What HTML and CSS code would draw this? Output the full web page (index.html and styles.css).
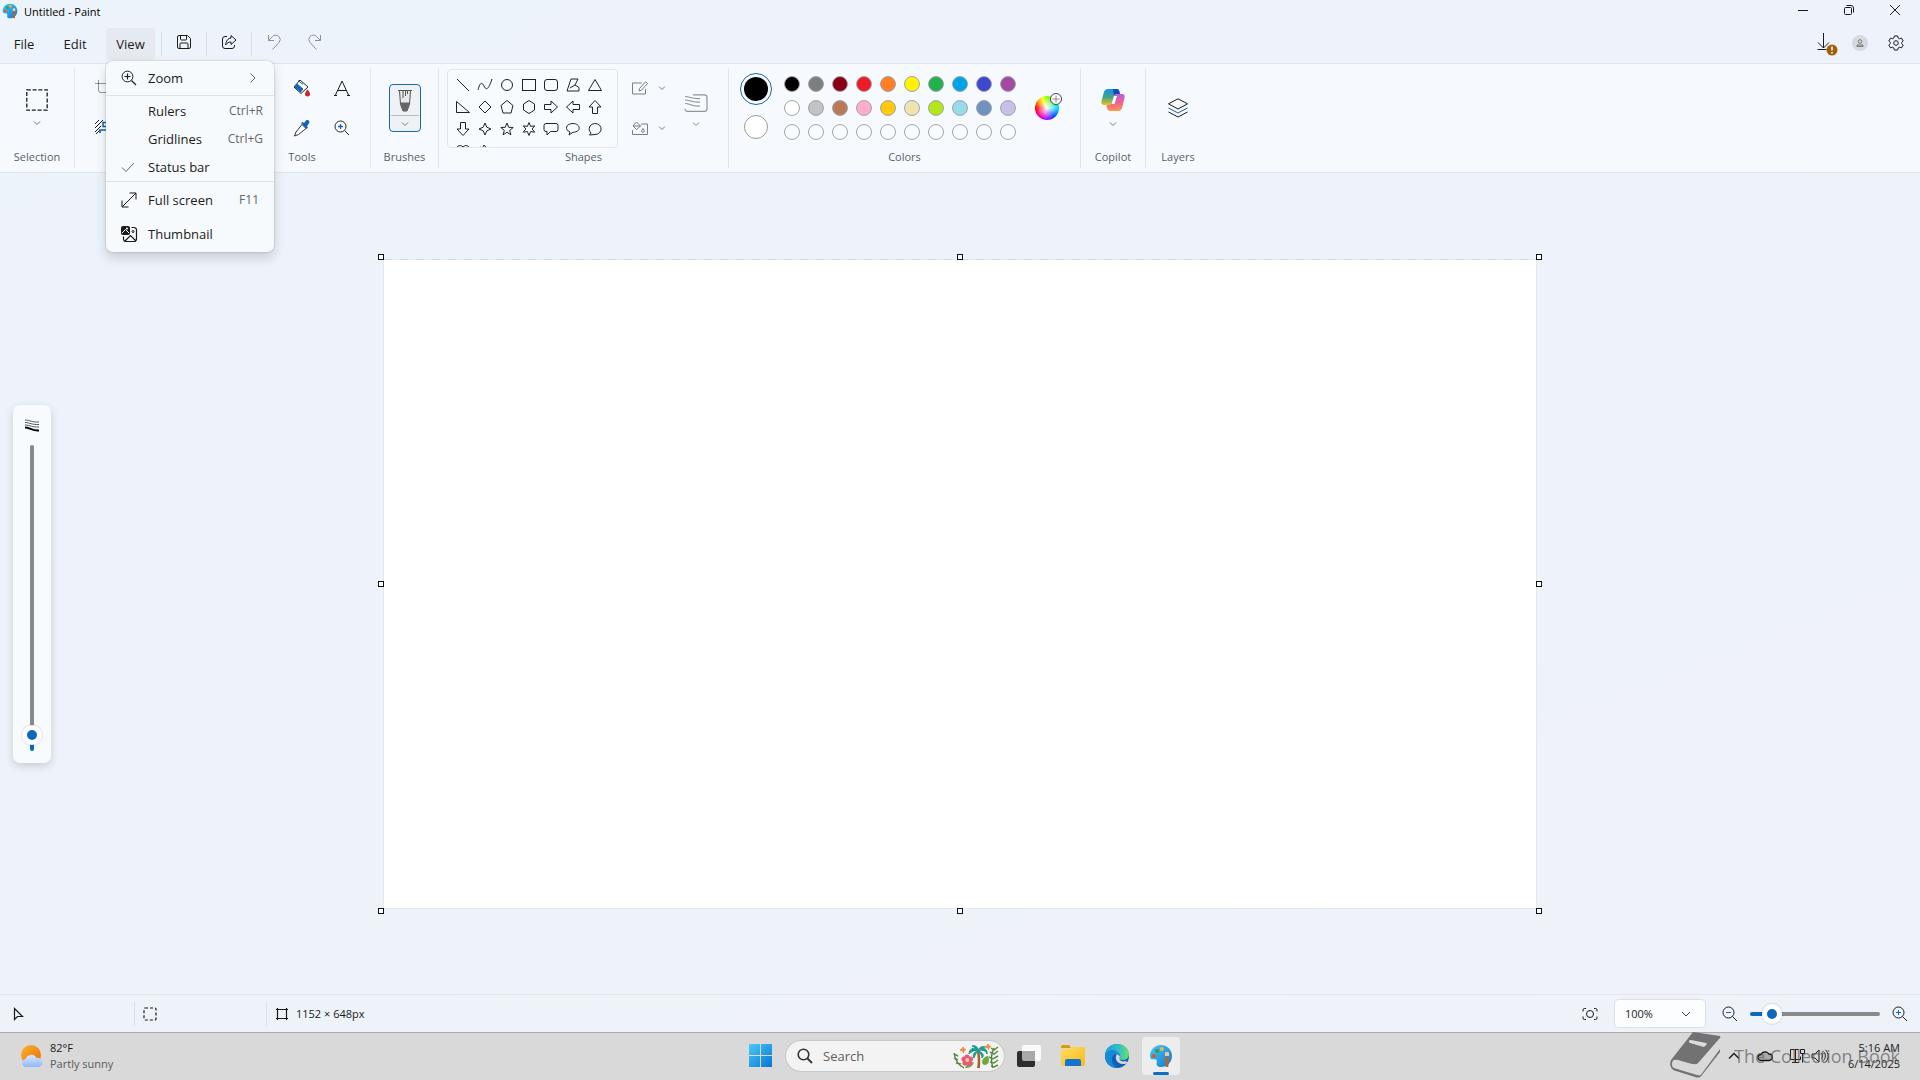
FILE: index.html
```
<!DOCTYPE html>
<html lang="en">
<head>
<meta charset="utf-8">
<title>Untitled - Paint</title>
<link rel="stylesheet" href="styles.css">
</head>
<body>
<svg class="defs" aria-hidden="true">
  <defs>
    <linearGradient id="g-pal" x1="0" y1="0" x2="1" y2="1"><stop offset="0" stop-color="#45c8f5"/><stop offset="1" stop-color="#1478cf"/></linearGradient>
    <linearGradient id="g-win" x1="0" y1="0" x2="1" y2="1"><stop offset="0" stop-color="#4cc9fa"/><stop offset="1" stop-color="#0675d3"/></linearGradient>
    <linearGradient id="g-sun" x1="0" y1="0" x2="1" y2="1"><stop offset="0" stop-color="#fbb32a"/><stop offset="1" stop-color="#ea6c0c"/></linearGradient>
    <linearGradient id="g-cloud" x1="0" y1="0" x2="0" y2="1"><stop offset="0" stop-color="#dbe9ff"/><stop offset="1" stop-color="#8fb7f5"/></linearGradient>
    <linearGradient id="g-fold" x1="0" y1="0" x2="1" y2="1"><stop offset="0" stop-color="#ffdb63"/><stop offset="1" stop-color="#f7bb17"/></linearGradient>
    <linearGradient id="g-edge" x1="0" y1="0" x2="1" y2="0"><stop offset="0" stop-color="#1b9de2"/><stop offset=".6" stop-color="#35c1c4"/><stop offset="1" stop-color="#6ee05f"/></linearGradient>
    <linearGradient id="g-cop1" x1="0" y1="0" x2="0" y2="1"><stop offset="0" stop-color="#1a8fe6"/><stop offset=".5" stop-color="#3aa58f"/><stop offset="1" stop-color="#f0c419"/></linearGradient>
    <linearGradient id="g-cop2" x1="0" y1="0" x2="0" y2="1"><stop offset="0" stop-color="#b560e8"/><stop offset=".5" stop-color="#ef5f8f"/><stop offset="1" stop-color="#fb9a4b"/></linearGradient>
    <symbol id="palette" viewBox="0 0 24 24">
      <path d="M12 1C5.500 1 1 6 1 12c0 4 2.500 3.200 4.500 3.200 2.500 0 2.600 1.800 2.200 3.800C7.200 21.500 9 23 12 23c6.500 0 11-5 11-11S18.500 1 12 1z" fill="url(#g-pal)"/>
      <circle cx="4.800" cy="12" r="2" fill="#d8582e"/><circle cx="8" cy="7" r="2.100" fill="#2f9e45"/><circle cx="12.800" cy="5" r="1.900" fill="#f2bf2b"/>
      <rect x="16" y="8" width="4" height="5" rx="1" fill="#f0c89a"/><rect x="16" y="12" width="4" height="2" fill="#777"/><path d="M16.200 14h3.600l-.5 9h-2.600z" fill="#b5652b"/>
    </symbol>
    <symbol id="chev" viewBox="0 0 8 8"><path d="M1 2.500l3 3 3-3" fill="none" stroke="currentColor"/></symbol>
    <symbol id="zoomin" viewBox="0 0 16 16"><path d="M10.500 10.500L15 15M3.500 6.500h6M6.500 3.500v6" fill="none" stroke="currentColor" stroke-width="1.200"/><circle cx="6.500" cy="6.500" r="5.400" fill="none" stroke="currentColor"/></symbol>
  </defs>
</svg>

<header class="titlebar">
  <svg class="app-icon" width="16" height="16"><use href="#palette"/></svg>
  <h1 class="title">Untitled - Paint</h1>
  <div class="window-buttons">
    <button class="win-btn" aria-label="Minimize"><svg width="10" height="10" class="ink"><path d="M0 5.500h10"/></svg></button>
    <button class="win-btn" aria-label="Restore"><svg width="10" height="10" class="ink"><rect x=".5" y="2.500" width="7" height="7" rx="1"/><path d="M2.500.5H7A2.500 2.500 0 0 1 9.500 3v4.500"/></svg></button>
    <button class="win-btn" aria-label="Close"><svg width="10" height="10" class="ink"><path d="M0 0l10 10M10 0L0 10"/></svg></button>
  </div>
</header>

<nav class="menubar">
  <button class="menu-btn menu-file">File</button>
  <button class="menu-btn menu-edit">Edit</button>
  <div class="menu-anchor">
    <button class="menu-btn menu-view" aria-expanded="true">View</button>
    <div class="menu" role="menu">
      <button class="item tall"><svg width="16" height="16"><use href="#zoomin"/></svg><span>Zoom</span><svg class="sub" width="8" height="10"><path d="M1.500.5L6 5 1.500 9.500" fill="none" stroke="#666"/></svg></button>
      <hr>
      <button class="item"><i></i><span>Rulers</span><kbd>Ctrl+R</kbd></button>
      <button class="item"><i></i><span>Gridlines</span><kbd>Ctrl+G</kbd></button>
      <button class="item"><svg width="16" height="16"><path d="M1 8.500l4 4 8-8.500" fill="none" stroke="#666"/></svg><span>Status bar</span></button>
      <hr>
      <button class="item tall"><svg width="16" height="16" class="ink"><path d="M1 15L15 1M8.500 1H15v6.500M1 8.500V15h6.500"/></svg><span>Full screen</span><kbd class="f11">F11</kbd></button>
      <button class="item tall"><svg width="16" height="16"><path d="M2 0h5a2 2 0 0 1 2 2v5a2 2 0 0 1-2 2H2a2 2 0 0 1-2-2V2a2 2 0 0 1 2-2z" fill="#1a1a1a"/><path d="M1 7l3.500-3.500L8 7" fill="none" stroke="#fff"/><circle cx="6" cy="2.500" r="1" fill="#fff"/><path d="M10.500 1.500H13A2.500 2.500 0 0 1 15.500 4v9a2.500 2.500 0 0 1-2.500 2.500H5A2.500 2.500 0 0 1 2.500 13v-2.500M4 15l5.500-5.500L15 15" fill="none" stroke="#1a1a1a" stroke-width="1.200"/><circle cx="12" cy="5.500" r="1" fill="none" stroke="#1a1a1a"/></svg><span>Thumbnail</span></button>
    </div>
  </div>
  <span class="vsep first"></span>
  <button class="tool-btn" aria-label="Save"><svg width="16" height="16" class="ink"><path d="M3 1.500h8.500l3 3V13a1.500 1.500 0 0 1-1.500 1.500H3A1.500 1.500 0 0 1 1.500 13V3A1.500 1.500 0 0 1 3 1.500zM4.500 1.500V5a1 1 0 0 0 1 1h4a1 1 0 0 0 1-1V1.500M4 14.500V10a1 1 0 0 1 1-1h6a1 1 0 0 1 1 1v4.500"/></svg></button>
  <span class="vsep"></span>
  <button class="tool-btn" aria-label="Share"><svg width="16" height="16" class="ink"><path d="M6 2.500H4A2.500 2.500 0 0 0 1.500 5v7A2.500 2.500 0 0 0 4 14.500h7a2.500 2.500 0 0 0 2.500-2.500v-1M10 1.500L15 6l-5 4.500V8C7.500 8 6 9 4.500 11 5 7 7 4.200 10 4z"/></svg></button>
  <span class="vsep"></span>
  <button class="tool-btn undo faded" aria-label="Undo"><svg width="16" height="16" class="ink"><path d="M1.500 1v5.500H7M1.500 6.500l4-4a4.500 4.500 0 0 1 6.500 0 4.500 4.500 0 0 1 0 6L5.500 15.500"/></svg></button>
  <button class="tool-btn redo faded" aria-label="Redo"><svg width="16" height="16" class="ink"><path d="M14.500 1v5.500H9M14.500 6.500l-4-4a4.500 4.500 0 0 0-6.500 0 4.500 4.500 0 0 0 0 6l6.500 7"/></svg></button>
  <div class="account">
    <button class="acc-btn" aria-label="Update available"><svg width="14" height="22" class="ink"><path d="M6.500 1v15M1 10.500l5.500 5.500 5.500-5.500M.5 17.500h9"/><circle cx="15" cy="18" r="5.500" fill="#a05f0a" stroke="none"/><path d="M15 14.500v4M15 20v1.500" stroke="#fff" stroke-width="1.500"/></svg></button>
    <button class="acc-btn" aria-label="Account"><svg width="16" height="16"><circle cx="8" cy="8" r="8" fill="#d6dae1"/><g fill="none" stroke="#777"><circle cx="8" cy="6.500" r="1.800"/><path d="M5 11.500V10h6v1.500z"/></g></svg></button>
    <button class="acc-btn" aria-label="Settings"><svg width="16" height="16" class="ink"><path d="M6.300 1h3.400l.5 2.100 1.300.7 2-.7 1.700 2.900-1.600 1.500v1l1.600 1.500-1.700 2.900-2-.7-1.300.7-.5 2.100H6.300l-.5-2.100-1.300-.7-2 .7L.8 10l1.600-1.500v-1L.8 6l1.700-2.900 2 .7 1.300-.7z"/><circle cx="8" cy="8" r="2.300"/></svg></button>
  </div>
</nav>

<section class="ribbon">
  <div class="group g-selection">
    <div class="body"><button class="flat" aria-label="Select"><svg width="22" height="22" class="ink"><rect x=".8" y=".8" width="20.400" height="20.400" stroke-dasharray="4 1.800" stroke-width="1.300"/></svg><svg class="chev" width="8" height="8"><use href="#chev"/></svg></button></div>
    <h2>Selection</h2>
  </div>
  <div class="group g-image" aria-label="Image">
    <div class="body image-tools">
      <button class="flat" aria-label="Crop"><svg width="16" height="16" class="ink faded"><path d="M0 3.500h10A2.500 2.500 0 0 1 12.500 6v10M3.500 0v10A2.500 2.500 0 0 0 6 12.500h10"/></svg></button>
      <button class="flat" aria-label="Remove background"><svg width="16" height="16" class="ink"><path d="M0 4l4-4M0 8l8-8M0 12L6 6M1 14l4-4"/><path d="M5 13v-3h10v3M8 2.500h5v4H8z" stroke="#155fb0" stroke-width="1.500"/></svg></button>
    </div>
  </div>
  <div class="group g-tools">
    <div class="body tools-grid">
      <span></span>
      <button class="flat" aria-label="Fill"><svg width="18" height="18"><path d="M7 1l8 7-7 6.500L1 8z" fill="#fff" stroke="#222"/><path d="M4 5l6 5-2.500 3L2 8zM5 1.500l5 4" fill="#1466b8" stroke="#1466b8"/><path d="M14.500 10.500c1.500 2 2.500 3.200 2.500 4.500a2.500 2.500 0 0 1-5 0c0-1.300 1-2.500 2.500-4.500z" fill="#c32b2b"/></svg></button>
      <button class="flat" aria-label="Text"><svg width="16" height="16" class="ink"><path d="M1.500 15L8 1l6.500 14M4 10.500h8M0 15.500h3M13 15.500h3"/></svg></button>
      <span></span>
      <button class="flat" aria-label="Color picker"><svg width="18" height="18"><path d="M9 5.500l4 4-7.500 6-4 1.500 1.500-4z" fill="#fff" stroke="#333"/><path d="M8 4l1.500-1 1.500 1 2-2.500c2-1.500 4.500 1 3 3L14 7l1 1.500L13.500 10z" fill="#0f62b8"/></svg></button>
      <button class="flat" aria-label="Magnifier"><svg width="16" height="16"><path d="M10.500 10.500l4.500 4.500" stroke="#222"/><circle cx="6.500" cy="6.500" r="5.500" fill="#fff" stroke="#222"/><path d="M4 6.500h5M6.500 4v5" stroke="#0f62b8" stroke-width="1.300"/></svg></button>
    </div>
    <h2>Tools</h2>
  </div>
  <div class="group g-brushes">
    <div class="body"><button class="brush" aria-label="Brushes"><svg width="16" height="24"><path d="M2.500 1.500h11l-1 14-2.500 6.500H6l-2.500-6.500z" fill="#e8e9ea" stroke="#555"/><path d="M3.500 13.500h9l-.5 3c-.5 2-1.500 3-2 5.500H6c-.5-2.500-1.500-3.500-2-5.500z" fill="#666"/><path d="M1 1.500h14M6 2v7M8.500 2v5M10.500 2v3" stroke="#555"/></svg><hr><svg class="chev" width="8" height="8"><use href="#chev"/></svg></button></div>
    <h2>Brushes</h2>
  </div>
  <div class="group g-shapes">
    <div class="body shapes-body">
      <div class="gallery">
        <svg viewBox="0 0 16 16"><path d="M2 2l12 12"/></svg>
        <svg viewBox="0 0 16 16"><path d="M1 13C3 5 5 5 7 9s4 5 8-7"/></svg>
        <svg viewBox="0 0 16 16"><circle cx="8" cy="8" r="5.500"/></svg>
        <svg viewBox="0 0 16 16"><rect x="1.500" y="2.500" width="13" height="11"/></svg>
        <svg viewBox="0 0 16 16"><rect x="1.500" y="2.500" width="13" height="11" rx="2.500"/></svg>
        <svg viewBox="0 0 16 16"><path d="M6 2h7l-3 6 4 2.500V14H2zM5 11l5-3"/></svg>
        <svg viewBox="0 0 16 16"><path d="M8 2.500l6.500 11h-13z"/></svg>
        <svg viewBox="0 0 16 16"><path d="M1.500 2.500v11h13z"/></svg>
        <svg viewBox="0 0 16 16"><path d="M8 2l6 6-6 6-6-6z"/></svg>
        <svg viewBox="0 0 16 16"><path d="M8 1.500l6 5-2 7.500H4L2 6.500z"/></svg>
        <svg viewBox="0 0 16 16"><path d="M8 1.500L13.500 5v6L8 14.500 2.500 11V5z"/></svg>
        <svg viewBox="0 0 16 16"><path d="M1.500 5.500H8v-3.500l6.500 6L8 14v-3.500H1.500z"/></svg>
        <svg viewBox="0 0 16 16"><path d="M14.500 5.500H8v-3.500L1.500 8 8 14v-3.500h6.500z"/></svg>
        <svg viewBox="0 0 16 16"><path d="M5.500 14.500V8H2l6-6.500L14 8h-3.500v6.500z"/></svg>
        <svg viewBox="0 0 16 16"><path d="M5.500 1.500V8H2l6 6.500L14 8h-3.500V1.500z"/></svg>
        <svg viewBox="0 0 16 16"><path d="M8 2l1.800 4.200L14 8 9.800 9.800 8 14 6.200 9.800 2 8l4.200-1.800z"/></svg>
        <svg viewBox="0 0 16 16"><path d="M8 2l1.700 4.300 4.500.2-3.500 2.900 1.200 4.400L8 11.300l-3.900 2.500 1.200-4.400L1.800 6.500l4.500-.2z"/></svg>
        <svg viewBox="0 0 16 16"><path d="M8 1.500l1.600 3.900 4.100-.6L11.200 8l2.500 3.200-4.100-.6L8 14.500l-1.600-3.900-4.100.6L4.800 8 2.300 4.800l4.100.6z"/></svg>
        <svg viewBox="0 0 16 16"><path d="M3 2.500h10a2 2 0 0 1 2 2v4a2 2 0 0 1-2 2H7.500L4 14v-3.500H3a2 2 0 0 1-2-2v-4a2 2 0 0 1 2-2z"/></svg>
        <svg viewBox="0 0 16 16"><path d="M5 11C-.5 9 .5 2.500 8 2.500s9 8.500 0 8.800L4 14z"/></svg>
        <svg viewBox="0 0 16 16"><path d="M4 12A6 5.500 0 1 1 8 13.500L2.500 14z"/></svg>
        <svg viewBox="0 0 16 16"><path d="M8 14L2 8C-.5 4 5 .5 8 4c3-3.500 8.500 0 6 4z"/></svg>
        <svg viewBox="0 0 16 16"><path d="M1 7l2.500-3 2 1L7 2l2.500 3-1 2L14 12l-4 2-9-7z"/></svg>
      </div>
      <div class="shape-opts">
        <button class="flat opt" aria-label="Outline"><svg width="16" height="14" class="ink"><path d="M9.500 2H.5v11h13V8M7 10l.5-2.500L13.500.8l2 1.700L9.500 9.200z"/></svg><svg width="8" height="8"><use href="#chev"/></svg></button>
        <button class="flat opt" aria-label="Fill shape"><svg width="16" height="14" class="ink"><path d="M9 3h6.500v10.500H.5V9M4.500 1l4 4-4 3.500-3.500-3.500zM1 5h8M11 7.500l1.200 2a1.300 1.300 0 1 1-2.400 0z"/></svg><svg width="8" height="8"><use href="#chev"/></svg></button>
      </div>
      <button class="flat size" aria-label="Size"><svg width="24" height="18" class="ink"><path d="M9 .8h11.500a2.500 2.500 0 0 1 2.500 2.500v11.500a2.500 2.500 0 0 1-2.500 2.500H3.500A2.500 2.500 0 0 1 1 14.800M1 2.500c5 0 8 3 15 2M1 6c5 0 8 3 15 2M1 9.500c5 0 8 3.500 15 2.500" stroke-width="1.200"/></svg><svg width="8" height="8"><use href="#chev"/></svg></button>
    </div>
    <h2>Shapes</h2>
  </div>
  <div class="group g-colors">
    <div class="body colors-body">
      <div class="current"><button class="primary" aria-label="Color 1"></button><button class="secondary" aria-label="Color 2"></button></div>
      <div class="swatches">
        <button class="sw c1"></button><button class="sw c2"></button><button class="sw c3"></button><button class="sw c4"></button><button class="sw c5"></button><button class="sw c6"></button><button class="sw c7"></button><button class="sw c8"></button><button class="sw c9"></button><button class="sw c10"></button>
        <button class="sw c11"></button><button class="sw c12"></button><button class="sw c13"></button><button class="sw c14"></button><button class="sw c15"></button><button class="sw c16"></button><button class="sw c17"></button><button class="sw c18"></button><button class="sw c19"></button><button class="sw c20"></button>
        <button class="sw"></button><button class="sw"></button><button class="sw"></button><button class="sw"></button><button class="sw"></button><button class="sw"></button><button class="sw"></button><button class="sw"></button><button class="sw"></button><button class="sw"></button>
      </div>
      <button class="wheel" aria-label="Edit colors"><svg width="12" height="12"><circle cx="6" cy="6" r="5.500" fill="#fff" stroke="#444"/><path d="M2.500 6h7M6 2.500v7" stroke="#888"/></svg></button>
    </div>
    <h2>Colors</h2>
  </div>
  <div class="group g-copilot">
    <div class="body"><button class="flat" aria-label="Copilot"><svg width="24" height="24" viewBox="0 0 24 24"><path d="M7 1h9c1.500 0 2 1 2.500 3l.5 2h-3c-2 0-2.500 1-3 3l-1.500 5c-.5 2-1.500 3-3.500 3H3c-2.500 0-3-1.500-2.500-4L3 4c.6-2 2-3 4-3z" fill="url(#g-cop1)"/><path d="M12 1h4c1.500 0 2 1 2.500 3l.5 2h-3c-2 0-2.500 1-3 2z" fill="#1748b8"/><path d="M17 23H9c-1.500 0-2.500-1-3-3l-.5-3h2c2 0 3-1 3.500-3l1.500-5c.5-2 1.500-3 3.500-3h5c2.500 0 3 1.500 2.500 4L21 20c-.6 2-2 3-4 3z" fill="url(#g-cop2)"/><path d="M13 8h3l-2.500 8h-3z" fill="#fff"/></svg><svg class="chev" width="8" height="8"><use href="#chev"/></svg></button></div>
    <h2>Copilot</h2>
  </div>
  <div class="group g-layers">
    <div class="body"><button class="flat" aria-label="Layers"><svg width="20" height="20" class="ink"><path d="M10 .8l9.500 5L10 11 .5 5.800z"/><path d="M.5 10l9.500 5 9.500-5" stroke="#155fb0"/><path d="M.5 14l9.500 5 9.500-5"/></svg></button></div>
    <h2>Layers</h2>
  </div>
</section>

<main class="workspace">
  <label class="brush-size" aria-label="Brush size">
    <svg width="16" height="14"><path d="M1 1c5 0 7 2.500 14 2M1 3.500c5 0 7 2.500 14 2M1 6c5 0 7 2.500 14 2" fill="none" stroke="#555"/><path d="M1 8.500c5 0 7 3.500 14 3" fill="none" stroke="#000" stroke-width="2"/></svg>
    <input class="v-range" type="range" min="0" max="100" value="2">
  </label>
  <div class="canvas">
    <span class="handle tl"></span><span class="handle tc"></span><span class="handle tr"></span>
    <span class="handle ml"></span><span class="handle mr"></span>
    <span class="handle bl"></span><span class="handle bc"></span><span class="handle br"></span>
  </div>
</main>

<footer class="statusbar">
  <div class="cell"><svg width="16" height="16" class="ink"><path d="M1.500 2.500v11l3-3h5z" stroke-width="1.200"/></svg></div>
  <div class="cell second"><svg width="14" height="14" class="ink"><rect x="1" y="1" width="12" height="12" rx="1" stroke-dasharray="3 2" stroke-width="1.200"/></svg></div>
  <div class="cell third"><svg width="14" height="14" class="ink"><path d="M2.500 1v12M11.500 1v12M1 2.500h12M1 11.500h12" stroke-width="1.200"/></svg><span>1152 × 648px</span></div>
  <div class="zoom-tools">
    <button class="flat" aria-label="Fit to window"><svg width="16" height="14" class="ink"><circle cx="8" cy="7" r="3.500"/><path d="M4 1.500H2.500A1.500 1.500 0 0 0 1 3v1.500M12 1.500h1.500A1.500 1.500 0 0 1 15 3v1.500M4 12.500H2.500A1.500 1.500 0 0 1 1 11V9.500M12 12.500h1.500A1.500 1.500 0 0 0 15 11V9.500"/></svg></button>
    <div class="zoom-select"><select aria-label="Zoom level"><option>100%</option></select><svg width="10" height="10"><path d="M1 3l4 4 4-4" fill="none" stroke="#444"/></svg></div>
    <button class="flat" aria-label="Zoom out"><svg width="16" height="16" class="ink"><circle cx="6.500" cy="6.500" r="5.500"/><path d="M10.500 10.500L15 15"/><path d="M4 6.500h5" stroke="#0f62b8"/></svg></button>
    <input class="h-range" type="range" min="0" max="100" value="11" aria-label="Zoom">
    <button class="flat" aria-label="Zoom in"><svg width="16" height="16" class="ink"><circle cx="6.500" cy="6.500" r="5.500"/><path d="M10.500 10.500L15 15"/><path d="M4 6.500h5M6.500 4v5" stroke="#0f62b8"/></svg></button>
  </div>
</footer>

<div class="taskbar">
  <div class="weather">
    <svg width="24" height="24"><circle cx="11" cy="11" r="10" fill="url(#g-sun)"/><path d="M6 23a4 4 0 0 1-.5-7.900A6 6 0 0 1 16.500 14a4.500 4.500 0 0 1 2.500 9z" fill="url(#g-cloud)"/></svg>
    <div class="weather-text"><span>82°F</span><span class="dim">Partly sunny</span></div>
  </div>
  <div class="apps">
    <button class="app" aria-label="Start"><svg width="24" height="24"><path d="M0 0h11v11H0zM12 0h11v11H12zM0 12h11v11H0zM12 12h11v11H12z" fill="url(#g-win)"/></svg></button>
    <label class="search">
      <svg width="16" height="16"><circle cx="6.500" cy="6.500" r="5.300" fill="none" stroke="#333" stroke-width="1.600"/><path d="M10.500 10.500l4.500 4.500" stroke="#333" stroke-width="1.800"/></svg>
      <input type="search" placeholder="Search" aria-label="Search">
      <svg width="46" height="26" viewBox="0 0 46 26">
        <path d="M11 25C5 22 2 17 1 10M40 25c-2-6-2-14 1-20" fill="none" stroke="#4c7d36" stroke-width="1.300"/>
        <path d="M1 15l4 2M3 20l5 1M1 11l4 2M37 9l4 2 4-3M36 14l4 2 5-3M37 19l4 1 4-3M38 23l3 1 4-2M38 5l3 2 4-3" stroke="#5a8d3c" stroke-width="1.500" fill="none"/>
        <path d="M24 25c1-5 1-10 0-16l2-1c2 6 1 12 1 17z" fill="#a5602c"/>
        <path d="M25 8c-4-5-9-2-9 3 3-3 5-4 9-3-4 1-6 4-4 7 1-3 2-5 4-7 0 0 4 3 4 7 3-3 0-6-4-7 5-2 8 0 9 3 1-5-4-8-9-4 0-3-3-5-6-4 3 1 4 3 6 5 1-4 4-5 7-4-3 0-5 2-7 6z" fill="#1d9a8d" stroke="#1d9a8d"/>
        <path d="M29 20c0-5 4-7 6-7 2 4 1 9-4 9z" fill="#6fa83c"/>
        <path d="M12 25c2-5 5-5 9-6-1 4-4 6-9 6z" fill="#7ba845"/>
        <g fill="#e8577d"><circle cx="14" cy="14" r="2.600"/><circle cx="17.500" cy="16" r="2.600"/><circle cx="16.500" cy="20" r="2.600"/><circle cx="12" cy="20" r="2.600"/><circle cx="11" cy="16" r="2.600"/></g><circle cx="14.300" cy="17" r="2" fill="#fbd07a"/>
        <path d="M10 4l1 2 2 .5-2 1-.5 2.500-1-2.500-2.500-.5 2-1zM35 1l1 2 2 .5-2 1-.5 2-1-2-2.500-.5 2-1z" fill="#f28a3c" stroke="#f28a3c"/>
      </svg>
    </label>
    <button class="app" aria-label="Task view"><svg width="24" height="24"><rect x="5" y="1" width="19" height="16" rx="2" fill="#fafafa"/><rect x="0" y="7" width="18" height="16" rx="2" fill="#2d2d2d"/><path d="M5 7h13v10H7a2 2 0 0 1-2-2z" fill="#aaa"/></svg></button>
    <button class="app" aria-label="File Explorer"><svg width="26" height="24"><path d="M1 3a2 2 0 0 1 2-2h6l2 3h-10z" fill="#d99a0b"/><path d="M1 5h8l2-2h13a1 1 0 0 1 1 1v16a2 2 0 0 1-2 2H3a2 2 0 0 1-2-2z" fill="url(#g-fold)"/><path d="M5 22v-5a2 2 0 0 1 2-2h12a2 2 0 0 1 2 2v5z" fill="#1674cf"/></svg></button>
    <button class="app" aria-label="Edge"><svg width="24" height="24"><circle cx="12" cy="12" r="12" fill="#0e5fb5"/><path d="M0 12C0 5 5 0 12 0s12 5 12 10c0 4-3 6-6.500 6-3 0-4-1.500-3-3 .8-1.200.5-4.500-3.500-4.500C6 6 1 9 0 12z" fill="url(#g-edge)"/><path d="M0 12c1-4 4-6 7.500-6 4 0 7 3 7 6.500-1-2-3-3-5-2C5 13 6 21 13 24 5 24 0 19 0 12z" fill="#1688d8"/><path d="M12 10c-3 4 0 10 6 10 2 0 3.500-.5 4.500-1.500l-2-1.500c-2 .8-6 .5-6-2.500 0-1 .5-1.500.3-2.500z" fill="#d8d8d8"/></svg></button>
    <button class="app active" aria-label="Paint"><svg width="24" height="24"><use href="#palette"/></svg></button>
  </div>
  <div class="tray">
    <svg width="12" height="8" class="ink"><path d="M1 6.500l5-5 5 5" stroke-width="1.300"/></svg>
    <svg width="16" height="12"><path d="M4 10.500a3 3 0 0 1 0-6 4.500 4.500 0 0 1 8-.5 3.200 3.200 0 0 1 0 6.500z" fill="#aaa" stroke="#111" stroke-width="1.300"/></svg>
    <svg width="16" height="16" class="ink"><path d="M9.500 1.500h-8v10h10v-3M6.500 1.500v13M3 14.500h7M11.500 1.500h4v4h-4zM13.500 5.500v9"/></svg>
    <svg width="18" height="14" class="ink"><path d="M1 5v4h3l4 4V1L4 5zM10.500 4.500c1.300 1.500 1.300 3.500 0 5M12.500 2.500c2.500 2.500 2.500 6.500 0 9M14.500.8c3.500 3.500 3.500 9 0 12.400"/></svg>
    <div class="clock"><span>5:16 AM</span><span>6/14/2025</span></div>
  </div>
  <div class="brand">
    <svg width="52" height="48"><path d="M23 0l27 4c1 1 0 2-1 3L29 30c-2 3-4 2-7 2L8 28c-4-1-6 0-6 4 0 3 1 4 5 5l20 6c3 1 4 0 6-3L50 17v3L32 43c-2 3-4 3-7 2L6 39c-5-1-7-6-5-11z" fill="#727272"/><path d="M21 8l15 3c1 0 1 1 0 2l-2 2-14-4c-2-1-1-3 1-3z" fill="#ddd"/></svg>
    <span>The Collection Book</span>
  </div>
</div>
</body>
</html>
```
FILE: styles.css
```
* { box-sizing: border-box; }
body {
  margin: 0;
  min-height: 100vh;
  display: flex;
  flex-direction: column;
  overflow: hidden;
  background: linear-gradient(160deg, #edf3fa 0%, #eef3fb 45%, #edf3f8 65%, #f0f2fa 85%, #edf3f8 100%);
  color: #1b1b1b;
  font-family: "Open Sans", "Noto Sans", sans-serif;
  font-size: 13px;
}
button, input, select {
  font: inherit;
  color: inherit;
  border: 0;
  padding: 0;
  background: none;
}
svg { display: block; flex: none; overflow: visible; }
.defs { position: absolute; width: 0; height: 0; }
.ink { fill: none; stroke: #1a1a1a; }
.faded { opacity: .45; }

.titlebar { display: flex; align-items: center; height: 24px; padding: 0 2px 2px; }
.title { margin: 0 auto 0 6px; font-size: 11px; font-weight: 400; color: #000; }
.window-buttons { display: flex; }
.win-btn { display: grid; place-items: center; width: 46px; height: 20px; padding-bottom: 2px; }

.menubar { display: flex; align-items: center; height: 39px; }
.menu-btn { height: 32px; border-radius: 4px; }
.menu-file { width: 48px; }
.menu-edit { width: 54px; margin-right: 4px; }
.menu-view { display: block; width: 49px; background: #e5e9f0; }
.menu-anchor { position: relative; }
.menu {
  position: absolute;
  z-index: 5;
  top: 33px;
  left: 0;
  width: 168px;
  padding-bottom: 1px;
  border-radius: 7px;
  background: #f7fafd;
  box-shadow: 0 0 1px 1px rgba(0, 0, 0, .08), 0 6px 12px rgba(0, 0, 0, .16);
}
.menu hr { margin: 0 0 1px; border: 0; border-top: 1px solid #dee2e6; }
.item { display: flex; align-items: center; width: 100%; height: 28px; padding: 0 11px 0 15px; }
.item.tall { height: 34px; }
.item i { width: 16px; }
.item span { margin: 0 auto 0 11px; }
.item kbd { font-family: inherit; font-size: 12px; color: #666; }
.item .f11 { margin-right: 4px; }
.item .sub { margin-right: 6px; }
.vsep { width: 1px; height: 24px; background: #dce1e8; }
.vsep.first { margin-left: 6px; }
.tool-btn { display: grid; place-items: center; width: 44px; height: 32px; padding-bottom: 4px; }
.tool-btn.undo { width: 46px; }
.tool-btn.redo { width: 32px; }
.account { display: flex; margin-left: auto; padding-right: 6px; }
.acc-btn { display: grid; place-items: center; width: 36px; height: 32px; padding-bottom: 2px; }

.ribbon {
  display: flex;
  height: 110px;
  background: #f6fafe;
  border-top: 1px solid #dfe4ea;
  border-bottom: 1px solid #dfe4ea;
}
.group { display: flex; flex-direction: column; margin: 4px 0; border-right: 1px solid #e1e6ec; }
.group h2 { margin: 0; height: 20px; font-size: 11px; line-height: 18px; font-weight: 400; text-align: center; color: #5c5f63; }
.body { flex: 1; display: flex; align-items: center; justify-content: center; }
.flat { display: grid; justify-items: center; gap: 8px; }
.chev { color: #777; }
.g-selection { width: 75px; }
.g-image { width: 159px; padding-bottom: 20px; }
.g-tools { width: 137px; }
.g-brushes { width: 68px; }
.g-shapes { width: 290px; }
.g-colors { width: 352px; }
.g-copilot { width: 65px; }
.g-layers { width: 64px; border-right: 0; }
.image-tools { flex-direction: column; align-items: flex-start; gap: 24px; padding-left: 20px; }
.tools-grid { display: grid; grid-template-columns: repeat(3, 40px); grid-auto-rows: 40px; place-items: center; align-content: center; }
.brush {
  display: flex;
  flex-direction: column;
  align-items: center;
  width: 32px;
  height: 48px;
  padding-top: 4px;
  border: 1px solid #1a67b3;
  border-radius: 4px;
  background: #eff2f4;
}
.brush hr { width: 28px; margin: 2px 0 4px; border: 0; border-top: 1px solid #b9bcbf; }
.shapes-body { justify-content: flex-start; padding-left: 8px; }
.gallery {
  display: grid;
  grid-template-columns: repeat(7, 22px);
  grid-auto-rows: 22px;
  place-items: center;
  width: 171px;
  height: 79px;
  padding: 4px 4px 0;
  overflow: hidden;
  border: 1px solid #e2e6ea;
  border-radius: 4px;
  background: #f8fbfe;
}
.gallery svg { width: 16px; height: 16px; fill: none; stroke: #222; }
.shape-opts { display: grid; gap: 24px; margin-left: 14px; opacity: .55; }
.opt { display: flex; align-items: center; gap: 10px; height: 16px; }
.size { margin-left: 18px; padding-top: 5px; opacity: .45; }
.colors-body { justify-content: flex-start; padding-left: 11px; }
.current { display: grid; justify-items: center; gap: 10px; padding-bottom: 4px; }
.primary { width: 32px; height: 32px; border: 1px solid #1a67b3; border-radius: 50%; padding: 3px; background: #000 content-box; }
.secondary { width: 24px; height: 24px; border: 1px solid #999; border-radius: 50%; background: #fff; }
.swatches { display: grid; grid-template-columns: repeat(10, 16px); gap: 8px; margin-left: 12px; }
.sw { width: 16px; height: 16px; border: 1px solid #a2a6aa; border-radius: 50%; background: #f8fbfe; }
.c1 { background: #000; } .c2 { background: #7f7f7f; } .c3 { background: #880015; } .c4 { background: #ed1c24; }
.c5 { background: #ff7f27; } .c6 { background: #fff200; } .c7 { background: #22b14c; } .c8 { background: #00a2e8; }
.c9 { background: #3f48cc; } .c10 { background: #a349a4; } .c11 { background: #fff; } .c12 { background: #c3c3c3; }
.c13 { background: #b97a57; } .c14 { background: #ffaec9; } .c15 { background: #ffc90e; } .c16 { background: #efe4b0; }
.c17 { background: #b5e61d; } .c18 { background: #99d9ea; } .c19 { background: #7092be; } .c20 { background: #c8bfe7; }
.wheel {
  position: relative;
  width: 24px;
  height: 24px;
  margin-left: 19px;
  border-radius: 50%;
  background: radial-gradient(circle, #fff 0, rgba(255, 255, 255, 0) 65%), conic-gradient(#8f0, #0e8 60deg, #0df 90deg, #04f 140deg, #c0f 190deg, #f08 230deg, #f00 270deg, #fa0 310deg, #ff0 335deg, #8f0);
}
.wheel svg { position: absolute; top: -3px; right: -3px; }

.workspace { position: relative; flex: 1; display: grid; place-items: center; }
.brush-size {
  position: absolute;
  left: 13px;
  top: 50%;
  transform: translateY(-50%);
  display: flex;
  flex-direction: column;
  align-items: center;
  gap: 12px;
  width: 38px;
  height: 358px;
  padding: 14px 0 12px;
  border-radius: 7px;
  background: #f8fbfd;
  box-shadow: 0 3px 8px rgba(0, 0, 0, .16);
}
.v-range, .h-range { appearance: none; margin: 0; border-radius: 2px; }
.v-range { writing-mode: vertical-lr; direction: rtl; width: 4px; height: 306px; background: linear-gradient(to top, #0c67bd 5%, #8a8a8a 5%); }
.h-range { width: 130px; height: 4px; margin: 0 12px; background: linear-gradient(to right, #0c67bd 17%, #8a8a8a 17%); }
.v-range::-webkit-slider-thumb, .h-range::-webkit-slider-thumb {
  appearance: none;
  width: 20px;
  height: 20px;
  border: 5px solid #fff;
  border-radius: 50%;
  background: #0c67bd;
  box-shadow: 0 0 1px 1px rgba(0, 0, 0, .08);
}
.canvas { position: relative; width: 60%; aspect-ratio: 16 / 9; background: #fff; box-shadow: 0 0 0 1px #e4e8ee; }
.canvas::before {
  content: "";
  position: absolute;
  inset: -1px 0 auto;
  height: 1px;
  background: repeating-linear-gradient(to right, #d3d7dc 0 8px, #e6eaef 8px 16px);
}
.handle { position: absolute; width: 6px; height: 6px; border: 1px solid #111; background: #fff; }
.tl, .tc, .tr { top: -6px; }
.bl, .bc, .br { bottom: -6px; }
.tl, .ml, .bl { left: -6px; }
.tr, .mr, .br { right: -6px; }
.tc, .bc { left: calc(50% - 3px); }
.ml, .mr { top: calc(50% - 3px); }

.statusbar { display: flex; align-items: center; height: 38px; border-top: 1px solid #e3e7ec; font-size: 11px; }
.cell { display: flex; align-items: center; gap: 7px; width: 135px; height: 24px; padding-left: 13px; border-right: 1px solid #dce1e7; }
.cell.second { width: 132px; padding-left: 8px; }
.cell.third { width: 140px; padding-left: 8px; border: 0; }
.zoom-tools { display: flex; align-items: center; margin-left: auto; padding-right: 12px; }
.zoom-select { display: flex; align-items: center; width: 90px; height: 27px; margin: 0 17px; padding-right: 14px; border-radius: 4px; background: #fbfdff; box-shadow: 0 0 1px 1px rgba(0, 0, 0, .08); }
.zoom-select select { flex: 1; appearance: none; padding-left: 10px; }

.taskbar {
  position: relative;
  display: grid;
  grid-template-columns: 1fr auto 1fr;
  align-items: center;
  height: 48px;
  padding-bottom: 2px;
  background: #d9d9d9;
  border-top: 1px solid #a9abad;
  font-size: 11px;
}
.weather { display: flex; align-items: center; gap: 6px; padding-left: 20px; }
.weather-text, .clock { display: flex; flex-direction: column; line-height: 16px; }
.dim { color: #5a5a5a; }
.apps { display: flex; align-items: center; padding-left: 2px; }
.app { display: grid; place-items: center; width: 44px; height: 40px; }
.app.active { position: relative; width: 38px; height: 38px; margin: 0 3px; border-radius: 4px; background: #ededed; }
.app.active::after { content: ""; position: absolute; bottom: 0; left: 11px; width: 16px; height: 3px; border-radius: 2px; background: #0c6fc4; }
.search { display: flex; align-items: center; width: 218px; height: 30px; margin: 0 3px; padding: 0 5px 0 11px; border-radius: 15px; background: #f3f3f3; box-shadow: 0 0 1px 1px rgba(0, 0, 0, .08); }
.search input { flex: 1; min-width: 0; margin: 0 10px; font-size: 13px; outline: 0; }
.search input::placeholder { color: #5e5e5e; opacity: 1; }
.tray { display: flex; align-items: center; justify-content: flex-end; padding-right: 20px; }
.tray svg:nth-child(1) { margin-right: 17px; }
.tray svg:nth-child(2) { margin-right: 16px; }
.tray svg:nth-child(3) { margin-right: 6px; }
.clock { width: 71px; text-align: right; }
.brand { position: absolute; top: 0; right: 20px; display: flex; align-items: center; gap: 12px; height: 46px; font-size: 18px; color: rgba(90, 90, 90, .7); pointer-events: none; }
```
